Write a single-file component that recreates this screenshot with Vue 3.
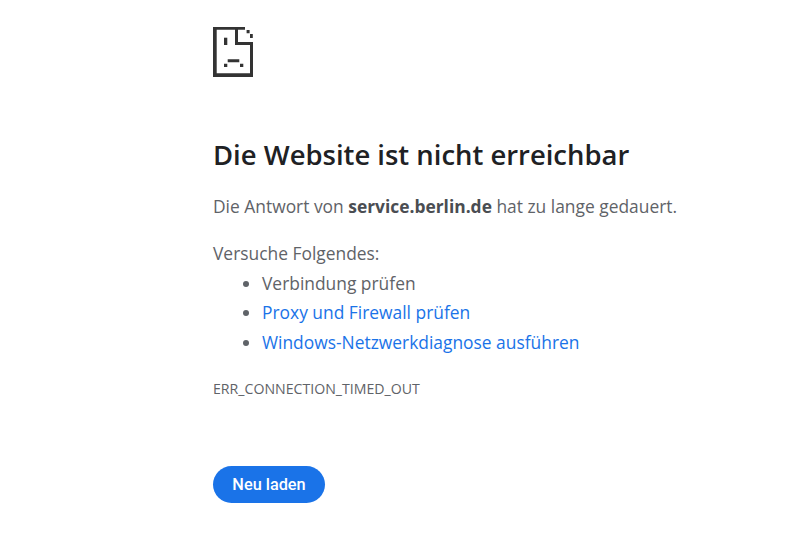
<script setup>
const steps = [
  { label: 'Verbindung prüfen' },
  { label: 'Proxy und Firewall prüfen', link: true },
  { label: 'Windows-Netzwerkdiagnose ausführen', link: true }
]
</script>

<template>
  <main class="page">
    <svg class="icon" width="40" height="50" viewBox="0 0 40 50" aria-hidden="true">
      <path fill="#333" d="M0 0H32V2.8H3.7V46.3H37V15H40V50H0Z" />
      <path fill="#333" d="M22 2H25V15H40V18H22Z" />
      <path fill="#333" d="M33.6 3H36.6V6.2H33.6ZM37 7H39.8V11H37Z" />
      <path fill="#333" d="M11 10.7H14.3V18H11Z" />
      <path fill="#333" d="M14.7 32.3H26.3V35.3H14.7ZM11 36.7H14.3V40H11ZM27 36.7H30.3V40H27Z" />
    </svg>

    <h1 class="title">Die Website ist nicht erreichbar</h1>
    <p class="lead">Die Antwort von <strong>service.berlin.de</strong> hat zu lange gedauert.</p>

    <p class="hint">Versuche Folgendes:</p>
    <ul class="steps">
      <li v-for="step in steps" :key="step.label">
        <a v-if="step.link" href="#">{{ step.label }}</a>
        <template v-else>{{ step.label }}</template>
      </li>
    </ul>

    <p class="code">ERR_CONNECTION_TIMED_OUT</p>

    <button class="reload" type="button">Neu laden</button>
  </main>
</template>

<style>
html, body {
  background: #fff;
}
</style>

<style scoped>
.page {
  box-sizing: border-box;
  height: 533px;
  overflow: hidden;
  padding: 27px 0 0 213px;
  font-family: "Open Sans", "Liberation Sans", sans-serif;
  color: #5f6368;
}

.icon {
  display: block;
}

.title {
  margin: 58px 0 0;
  font-size: 27.45px;
  line-height: 40px;
  font-weight: 600;
  color: #202124;
}

.lead {
  margin: 18px 0 0;
  font-size: 17.4px;
  line-height: 26px;
}

.lead strong {
  font-weight: 700;
  color: #4a4d52;
}

.hint {
  margin: 21px 0 0;
  font-size: 17.4px;
  line-height: 26px;
}

.steps {
  margin: 3px 0 0;
  padding: 0 0 0 49px;
  font-size: 17.4px;
  line-height: 29.4px;
}

.steps a {
  color: #1a73e8;
  text-decoration: none;
}

.code {
  margin: 23px 0 0;
  font-size: 14.15px;
  line-height: 18px;
}

.reload {
  display: block;
  width: 112px;
  height: 37px;
  margin: 68px 0 0;
  padding: 0;
  border: 0;
  border-radius: 19px;
  background: #1a73e8;
  color: #fff;
  font-family: Roboto, "Liberation Sans", sans-serif;
  font-size: 16.3px;
  font-weight: 500;
}
</style>
